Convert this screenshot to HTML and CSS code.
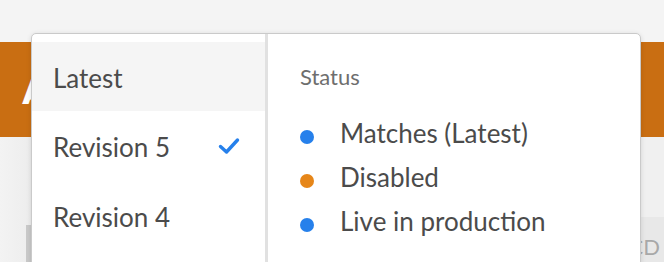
FILE: index.html
```html
<!DOCTYPE html>
<html>
<head>
<meta charset="utf-8">
<link rel="stylesheet" href="styles.css">
</head>
<body>
<div class="page">
  <div class="topbar"></div>
  <div class="banner"><span class="logo-letter">A</span></div>
  <div class="lower">
    <div class="lower-left"><div class="side-bar"></div></div>
    <div class="lower-mid"></div>
    <div class="lower-right">
      <div class="lower-right-top"></div>
      <div class="lower-right-bottom"><span class="cd">CD</span></div>
    </div>
  </div>

  <div class="popover">
    <ul class="revisions">
      <li class="rev is-hover">Latest</li>
      <li class="rev">Revision 5
        <svg class="check" width="22" height="18" viewBox="0 0 22 18"><path d="M2.5 9.5 L8.5 15 L19.5 3" fill="none" stroke="#2680eb" stroke-width="3.4" stroke-linecap="round" stroke-linejoin="round"/></svg>
      </li>
      <li class="rev">Revision 4</li>
    </ul>
    <div class="status">
      <div class="status-title">Status</div>
      <ul class="legend">
        <li class="legend-item"><span class="dot dot-blue"></span>Matches (Latest)</li>
        <li class="legend-item"><span class="dot dot-orange"></span>Disabled</li>
        <li class="legend-item"><span class="dot dot-blue"></span>Live in production</li>
      </ul>
    </div>
  </div>
</div>
</body>
</html>
```

FILE: styles.css
```css
* { box-sizing: border-box; }
html, body {
  margin: 0;
  padding: 0;
  width: 664px;
  height: 262px;
  overflow: hidden;
  background: #f4f4f4;
  font-family: "Lato", "Open Sans", sans-serif;
}
.page {
  position: relative;
  width: 664px;
  height: 262px;
  display: flex;
  flex-direction: column;
}
.topbar {
  height: 42px;
  background: #f4f4f4;
}
.banner {
  height: 95px;
  background: #c96e12;
  position: relative;
  overflow: hidden;
}
.logo-letter {
  position: absolute;
  left: 22px;
  top: 33px;
  font-family: "DejaVu Sans", sans-serif;
  font-weight: 700;
  font-size: 34px;
  line-height: 1;
  color: #ffffff;
}
.lower {
  flex: 1;
  display: flex;
}
.lower-left {
  width: 31px;
  background: linear-gradient(to right, #f3f3f3, #ededed);
  display: flex;
  justify-content: flex-end;
  align-items: flex-end;
}
.side-bar {
  width: 5px;
  height: 37px;
  background: #c9c9c9;
}
.lower-mid { flex: 1; background: #f4f4f4; }
.lower-right {
  width: 30px;
  display: flex;
  flex-direction: column;
}
.lower-right-top {
  height: 80px;
  background: #f0f0f0;
}
.lower-right-bottom {
  flex: 1;
  background: #e8e8e8;
  display: flex;
  justify-content: flex-end;
  align-items: flex-end;
  overflow: hidden;
}
.cd {
  font-size: 22px;
  line-height: 1;
  color: #a8a8a8;
  padding-right: 4px;
  margin-bottom: 4px;
}

.popover {
  position: absolute;
  left: 31px;
  top: 33px;
  width: 610px;
  height: 260px;
  background: #ffffff;
  border: 1px solid #cacaca;
  border-radius: 5px;
  box-shadow: 0 1px 5px rgba(0, 0, 0, 0.12);
  display: flex;
  overflow: hidden;
}
.revisions {
  list-style: none;
  margin: 0;
  padding: 8px 0 0 0;
  width: 233px;
  border-right: 3px solid #e1e1e1;
  flex: none;
  box-sizing: content-box;
}
.rev {
  height: 70px;
  padding: 2px 25px 0 21px;
  display: flex;
  align-items: center;
  justify-content: space-between;
  font-size: 26px;
  color: #4b4b4b;
}
.rev.is-hover { background: #f5f5f5; height: 69px; }
.check { display: block; margin-top: -2px; }

.status {
  flex: 1;
  padding: 30px 0 0 32px;
}
.status-title {
  font-size: 22px;
  line-height: 26px;
  color: #6e6e6e;
  margin-bottom: 21px;
}
.legend {
  list-style: none;
  margin: 0;
  padding: 0;
}
.legend-item {
  height: 44px;
  display: flex;
  align-items: center;
  font-size: 26px;
  color: #4b4b4b;
}
.dot {
  width: 14px;
  height: 14px;
  border-radius: 50%;
  margin-right: 26px;
  margin-top: 7px;
  flex: none;
}
.dot-blue { background: #2680eb; }
.dot-orange { background: #e68619; }
```
